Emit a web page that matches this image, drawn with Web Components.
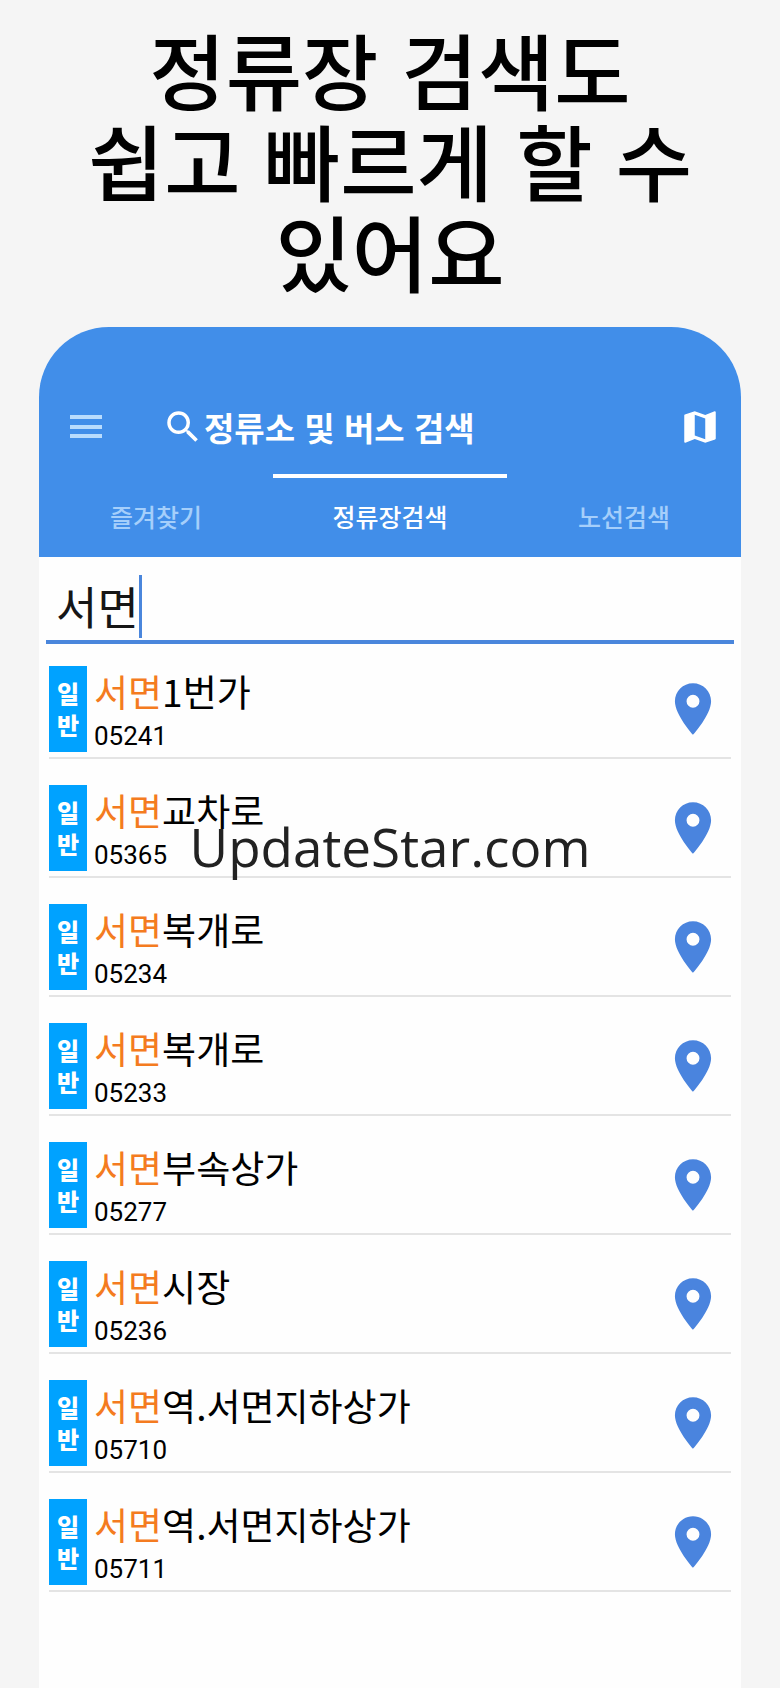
<!DOCTYPE html>
<html lang="ko">
<head>
<meta charset="utf-8">
<meta name="viewport" content="width=device-width, initial-scale=1">
<title>정류장 검색</title>
<style>
  body { margin: 0; background: #f5f5f5; font-family: "Noto Sans CJK KR", sans-serif; }
</style>
</head>
<body>
<promo-page>
  <span slot="headline">정류장 검색도<br>쉽고 빠르게 할 수<br>있어요</span>
  <app-header>
    <span slot="title">정류소 및 버스 검색</span>
    <tab-item slot="tabs">즐겨찾기</tab-item>
    <tab-item slot="tabs" active>정류장검색</tab-item>
    <tab-item slot="tabs">노선검색</tab-item>
  </app-header>
  <search-field value="서면"></search-field>
  <stop-list>
    <stop-row code="05241"><b>서면</b>1번가</stop-row>
    <stop-row code="05365"><b>서면</b>교차로</stop-row>
    <stop-row code="05234"><b>서면</b>복개로</stop-row>
    <stop-row code="05233"><b>서면</b>복개로</stop-row>
    <stop-row code="05277"><b>서면</b>부속상가</stop-row>
    <stop-row code="05236"><b>서면</b>시장</stop-row>
    <stop-row code="05710"><b>서면</b>역.서면지하상가</stop-row>
    <stop-row code="05711"><b>서면</b>역.서면지하상가</stop-row>
    <water-mark slot="overlay">UpdateStar.com</water-mark>
  </stop-list>
</promo-page>

<script>
const define = (name, render) => customElements.define(name, class extends HTMLElement {
  constructor() {
    super();
    this.attachShadow({ mode: 'open' });
  }
  connectedCallback() {
    this.shadowRoot.innerHTML = render(this);
  }
});

define('promo-page', () => `
  <style>
    :host { display: flex; flex-direction: column; min-height: 100vh; }
    h1 { margin: 0; padding: 23px 0 31px; font-size: 83px; line-height: 91px; font-weight: 500; text-align: center; color: #000; }
    main { flex: 1; margin: 0 5%; background: #fefefe; border-radius: 70px 70px 0 0; overflow: hidden; }
  </style>
  <h1><slot name="headline"></slot></h1>
  <main><slot></slot></main>
`);

define('app-header', () => `
  <style>
    :host { display: block; background: #418ee9; color: #fff; padding-top: 72px; }
    .bar { display: flex; align-items: center; height: 56px; padding: 0 20px 0 26px; }
    button { display: flex; padding: 0; border: 0; background: none; color: inherit; }
    h2 { flex: 1; display: flex; align-items: center; margin: 0 0 0 55px; font-size: 33px; line-height: 40px; font-weight: 700; }
    svg { display: block; fill: currentColor; }
    .menu { color: #b9dcfd; }
    nav { display: flex; margin-top: 19px; }
  </style>
  <div class="bar">
    <button class="menu" aria-label="메뉴"><svg width="42" height="42" viewBox="0 0 42 42"><path d="M5 9h32v4H5zM5 19h32v4H5zM5 28h32v4H5z"/></svg></button>
    <h2><svg width="42" height="42" viewBox="0 0 24 24" aria-hidden="true"><path d="M15.5 14h-.79l-.28-.27A6.471 6.471 0 0 0 16 9.500 6.500 6.500 0 1 0 9.500 16c1.610 0 3.090-.590 4.230-1.570l.27.28v.79l5 4.990L20.490 19l-4.990-5zm-6 0C7.010 14 5 11.990 5 9.500S7.010 5 9.500 5 14 7.010 14 9.500 11.990 14 9.500 14z"/></svg><slot name="title"></slot></h2>
    <button aria-label="지도"><svg width="42" height="42" viewBox="0 0 24 24"><path d="M20.500 3l-.16.03L15 5.100 9 3 3.360 4.900c-.21.07-.36.25-.36.48V20.500c0 .28.22.5.5.5l.16-.03L9 18.900l6 2.100 5.640-1.900c.21-.07.36-.25.36-.48V3.500c0-.28-.22-.5-.5-.5zM15 19l-6-2.110V5l6 2.110V19z"/></svg></button>
  </div>
  <nav><slot name="tabs"></slot></nav>
`);

define('tab-item', () => `
  <style>
    :host { display: block; flex: 1; color: #a5cffb; }
    :host([active]) { color: #fff; }
    a { display: block; height: 79px; border-top: 4px solid transparent; color: inherit; font-size: 25px; line-height: 76px; font-weight: 500; text-align: center; text-decoration: none; }
    :host([active]) a { border-top-color: #fff; }
  </style>
  <a href="#"><slot></slot></a>
`);

define('search-field', host => `
  <style>
    :host { display: block; padding: 16px 7px 0; }
    label { display: flex; align-items: center; height: 67px; padding-left: 10px; border-bottom: 4px solid #4a86dc; }
    input { field-sizing: content; min-width: 0; padding: 0 0 2px; border: 0; outline: 0; background: none; color: #161616; font: 400 45px/60px "Noto Sans CJK KR", sans-serif; }
    .caret { width: 3px; height: 63px; background: #4a86dc; }
  </style>
  <label><input type="text" aria-label="정류장 이름" value="${host.getAttribute('value')}"><span class="caret"></span></label>
`);

define('stop-list', () => `
  <style>
    :host { display: block; position: relative; padding: 0 10px; }
  </style>
  <slot></slot>
  <slot name="overlay"></slot>
`);

define('stop-row', host => `
  <style>
    :host { display: flex; align-items: center; gap: 7px; height: 86px; padding: 22px 0 5px; margin-bottom: 4px; border-bottom: 2px solid #e4e4e4; }
    .kind { display: flex; align-items: center; width: 38px; height: 86px; background: #00a2ff; color: #fff; font-size: 24px; line-height: 32px; font-weight: 900; text-align: center; }
    .kind span { flex: 1; padding: 0 7px; word-break: break-all; }
    .info { flex: 1; min-width: 0; color: #000; }
    .name { font-size: 37px; line-height: 50px; white-space: nowrap; }
    .code { padding-top: 4px; font: 400 26px/32px Roboto, sans-serif; }
    ::slotted(b) { font-weight: 400; color: #f47b20; }
    button { padding: 0; border: 0; margin-right: 7px; background: none; color: #4a84de; }
    svg { display: block; fill: currentColor; }
  </style>
  <div class="kind"><span>일반</span></div>
  <div class="info">
    <div class="name"><slot></slot></div>
    <div class="code">${host.getAttribute('code')}</div>
  </div>
  <button aria-label="위치 보기"><svg width="62" height="62" viewBox="0 0 24 24"><path d="M12 2C8.130 2 5 5.130 5 9c0 5.250 7 13 7 13s7-7.750 7-13c0-3.870-3.130-7-7-7zm0 9.500a2.500 2.500 0 0 1 0-5 2.500 2.500 0 0 1 0 5z"/></svg></button>
`);

define('water-mark', () => `
  <style>
    :host { position: absolute; top: 165px; left: 0; right: 0; text-align: center; color: #222; font: 400 53px/76px "Open Sans", sans-serif; pointer-events: none; }
  </style>
  <slot></slot>
`);
</script>
</body>
</html>
